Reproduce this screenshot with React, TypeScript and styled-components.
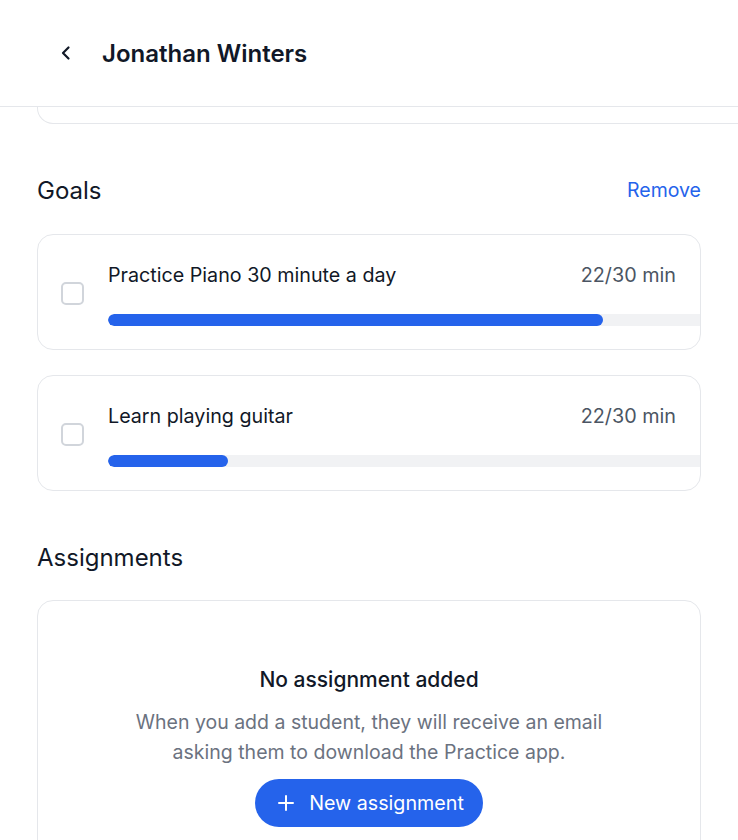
import React from "react";
import styled, { createGlobalStyle } from "styled-components";

const Global = createGlobalStyle`
  html, body { margin: 0; padding: 0; background: #ffffff; overflow: hidden; }
  body { font-family: Inter, "Noto Sans", sans-serif; color: #111827; -webkit-font-smoothing: antialiased; }
  * { box-sizing: border-box; }
`;

const Page = styled.div`
  width: 738px;
  min-height: 840px;
  display: flex;
  flex-direction: column;
  background: #fff;
  overflow: hidden;
`;

const Header = styled.header`
  height: 107px;
  display: flex;
  align-items: center;
  gap: 26px;
  padding: 0 0 0 56px;
  border-bottom: 1px solid #e5e7eb;
`;

const BackButton = styled.button`
  width: 20px;
  height: 20px;
  padding: 0;
  border: none;
  background: none;
  display: flex;
  align-items: center;
  justify-content: center;
  color: #111827;
`;

const Title = styled.h1`
  margin: 0;
  font-size: 24px;
  font-weight: 600;
  color: #111827;
`;

const Content = styled.main`
  display: flex;
  flex-direction: column;
  padding: 0 37px;
`;

const CardStub = styled.div`
  height: 17px;
  margin-right: -80px;
  border: 1px solid #e5e7eb;
  border-top: none;
  border-radius: 0 0 16px 16px;
`;

const SectionHeader = styled.div<{ $top: number }>`
  display: flex;
  align-items: center;
  justify-content: space-between;
  margin-top: ${(p) => p.$top}px;
  margin-bottom: 30px;
  height: 28px;
`;

const SectionTitle = styled.h2`
  margin: 0;
  font-size: 24px;
  font-weight: 400;
  color: #111827;
`;

const LinkButton = styled.button`
  border: none;
  background: none;
  padding: 0;
  font-family: inherit;
  font-size: 19.5px;
  font-weight: 400;
  color: #2563eb;
`;

const GoalList = styled.div`
  display: flex;
  flex-direction: column;
  gap: 25px;
`;

const GoalCard = styled.div`
  height: 116px;
  display: flex;
  align-items: center;
  gap: 24px;
  padding: 0 0 0 23px;
  border: 1px solid #e5e7eb;
  border-radius: 16px;
  overflow: hidden;
`;

const Checkbox = styled.span`
  flex: none;
  width: 23px;
  height: 23px;
  border: 2px solid #d1d5db;
  border-radius: 5px;
  margin-top: 2px;
`;

const GoalBody = styled.div`
  flex: 1;
  min-width: 0;
  display: flex;
  flex-direction: column;
  gap: 27px;
  padding-top: 4px;
`;

const GoalRow = styled.div`
  display: flex;
  justify-content: space-between;
  align-items: center;
  padding-right: 24px;
  height: 24px;
`;

const GoalName = styled.span`
  font-size: 19.7px;
  color: #111827;
`;

const GoalTime = styled.span`
  font-size: 19.8px;
  color: #4b5563;
`;

const Track = styled.div`
  width: 680px;
  height: 12px;
  border-radius: 6px;
  background: #f1f2f4;
  overflow: hidden;
`;

const Fill = styled.div`
  height: 100%;
  border-radius: 6px;
  background: #2563eb;
`;

const EmptyCard = styled.div`
  height: 260px;
  margin-top: -1px;
  border: 1px solid #e5e7eb;
  border-radius: 16px;
  display: flex;
  flex-direction: column;
  align-items: center;
  padding-top: 66px;
`;

const EmptyTitle = styled.h3`
  margin: 0;
  font-size: 21px;
  font-weight: 500;
  line-height: 26px;
  color: #111827;
`;

const EmptyText = styled.p`
  margin: 14px 0 0;
  font-size: 19.5px;
  line-height: 30px;
  color: #6b7280;
  text-align: center;
`;

const PrimaryButton = styled.button`
  margin-top: 12px;
  height: 48px;
  padding: 0 19px 0 22px;
  border: none;
  border-radius: 24px;
  background: #2563eb;
  color: #fff;
  font-family: inherit;
  font-size: 19.7px;
  font-weight: 400;
  display: flex;
  align-items: center;
  gap: 14px;
`;

const goals = [
  { name: "Practice Piano 30 minute a day", time: "22/30 min", fill: 495 },
  { name: "Learn playing guitar", time: "22/30 min", fill: 120 },
];

export default function App() {
  return (
    <Page>
      <Global />
      <Header>
        <BackButton aria-label="Back">
          <svg width="12" height="16" viewBox="0 0 12 16" fill="none">
            <path d="M8.5 2.5L3 8l5.5 5.5" stroke="#111827" strokeWidth="2.2" strokeLinecap="round" strokeLinejoin="round" />
          </svg>
        </BackButton>
        <Title>Jonathan Winters</Title>
      </Header>
      <Content>
        <CardStub />
        <SectionHeader $top={52}>
          <SectionTitle>Goals</SectionTitle>
          <LinkButton>Remove</LinkButton>
        </SectionHeader>
        <GoalList>
          {goals.map((g) => (
            <GoalCard key={g.name}>
              <Checkbox />
              <GoalBody>
                <GoalRow>
                  <GoalName>{g.name}</GoalName>
                  <GoalTime>{g.time}</GoalTime>
                </GoalRow>
                <Track>
                  <Fill style={{ width: `${g.fill}px` }} />
                </Track>
              </GoalBody>
            </GoalCard>
          ))}
        </GoalList>
        <SectionHeader $top={52}>
          <SectionTitle>Assignments</SectionTitle>
        </SectionHeader>
        <EmptyCard>
          <EmptyTitle>No assignment added</EmptyTitle>
          <EmptyText>
            When you add a student, they will receive an email
            <br />
            asking them to download the Practice app.
          </EmptyText>
          <PrimaryButton>
            <svg width="18" height="18" viewBox="0 0 18 18" fill="none">
              <path d="M9 2v14M2 9h14" stroke="#fff" strokeWidth="2" strokeLinecap="round" />
            </svg>
            New assignment
          </PrimaryButton>
        </EmptyCard>
      </Content>
    </Page>
  );
}
